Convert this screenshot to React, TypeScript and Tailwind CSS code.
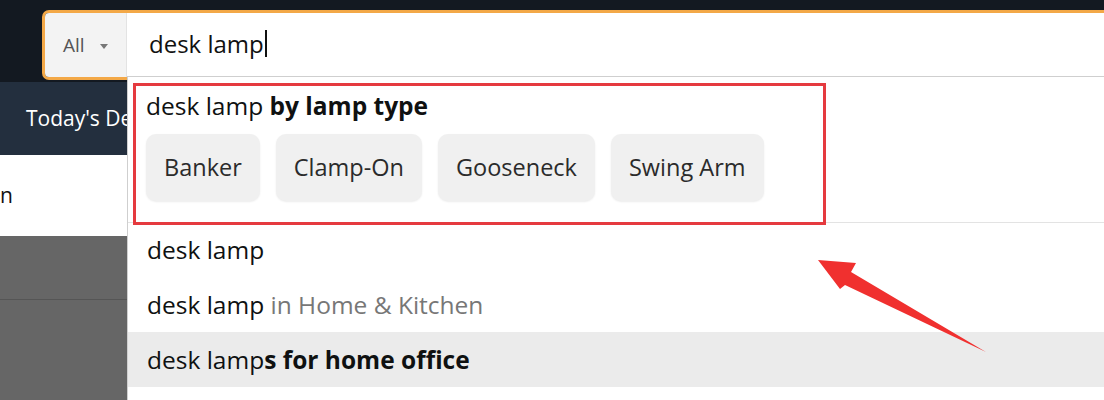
const chips = ["Banker", "Clamp-On", "Gooseneck", "Swing Arm"];

const rows = [
  { base: "desk lamp", rest: "", kind: "none", active: false },
  { base: "desk lamp", rest: " in Home & Kitchen", kind: "dept", active: false },
  { base: "desk lamp", rest: "s for home office", kind: "bold", active: true },
];

export default function App() {
  return (
    <div
      className="relative w-[1104px] h-[400px] overflow-hidden bg-white"
      style={{ fontFamily: '"Open Sans", "Noto Sans", sans-serif' }}
    >
      {/* top bar with search box */}
      <div className="h-[82px] bg-[#131921] pt-[10px] pl-[42px]">
        <div className="flex h-[70px] w-[1100px] rounded-[7px] border-[3px] border-[#f3a847] overflow-hidden">
          <div className="flex w-[82px] items-center gap-[15px] bg-[#f3f3f3] border-r border-[#e3e3e3] pl-[18px]">
            <span className="text-[19px] text-[#555]">All</span>
            <span className="mt-[2px] border-x-[4px] border-t-[5px] border-x-transparent border-t-[#777]" />
          </div>
          <div className="flex flex-1 items-center bg-white pl-[22px] pb-[3px]">
            <span className="text-[24px] text-[#111]">desk lamp</span>
            <span className="ml-[1px] h-[27px] w-[2px] bg-[#111]" />
          </div>
        </div>
      </div>

      {/* page behind dropdown */}
      <div className="h-[73px] bg-[#232f3e] flex items-center pl-[26px]">
        <span className="text-[21px] text-white">Today's Deals</span>
      </div>
      <div className="h-[81px] bg-white flex items-center">
        <span className="text-[21px] text-[#111]">n</span>
      </div>
      <div className="h-[64px] bg-[#666] border-b border-[#555]" />
      <div className="h-[100px] bg-[#666]" />

      {/* suggestions dropdown */}
      <div className="absolute left-[127px] top-[76px] right-0 bottom-0 bg-white border-l border-t border-[#cfcfcf]">
        <div className="h-[146px] border-b border-[#e3e3e3] pt-[6px] pl-[5px]">
          <div className="relative z-10 h-[142px] w-[693px] border-[3px] border-[#e53a3f] pl-[10px] pt-[3px]">
            <div className="text-[24.5px] leading-[34px] text-[#0f1111]">
              desk lamp <span className="font-bold">by lamp type</span>
            </div>
            <div className="mt-[11px] flex gap-[16px]">
              {chips.map((c) => (
                <div
                  key={c}
                  className="flex h-[67px] items-center rounded-[10px] bg-[#f0f0f0] px-[18px] text-[23.5px] text-[#2b2b2b] shadow-[0_1px_2px_rgba(0,0,0,0.08)]"
                >
                  {c}
                </div>
              ))}
            </div>
          </div>
        </div>
        {rows.map((r, i) => (
          <div
            key={i}
            className={`h-[55px] pl-[19px] text-[24.5px] leading-[55px] text-[#0f1111] whitespace-pre ${
              r.active ? "bg-[#ebebeb]" : ""
            } ${i === 0 ? "-mt-[1px]" : ""}`}
          >
            {r.base}
            {r.kind === "dept" && <span className="text-[#777]">{r.rest}</span>}
            {r.kind === "bold" && <span className="font-bold">{r.rest}</span>}
          </div>
        ))}
      </div>

      {/* annotation arrow */}
      <svg className="absolute left-0 top-0" width="1104" height="400" viewBox="0 0 1104 400">
        <polygon
          points="818,260 856,263 851,272 986,352 845,285 840,289"
          fill="#f0302f"
        />
      </svg>
    </div>
  );
}
